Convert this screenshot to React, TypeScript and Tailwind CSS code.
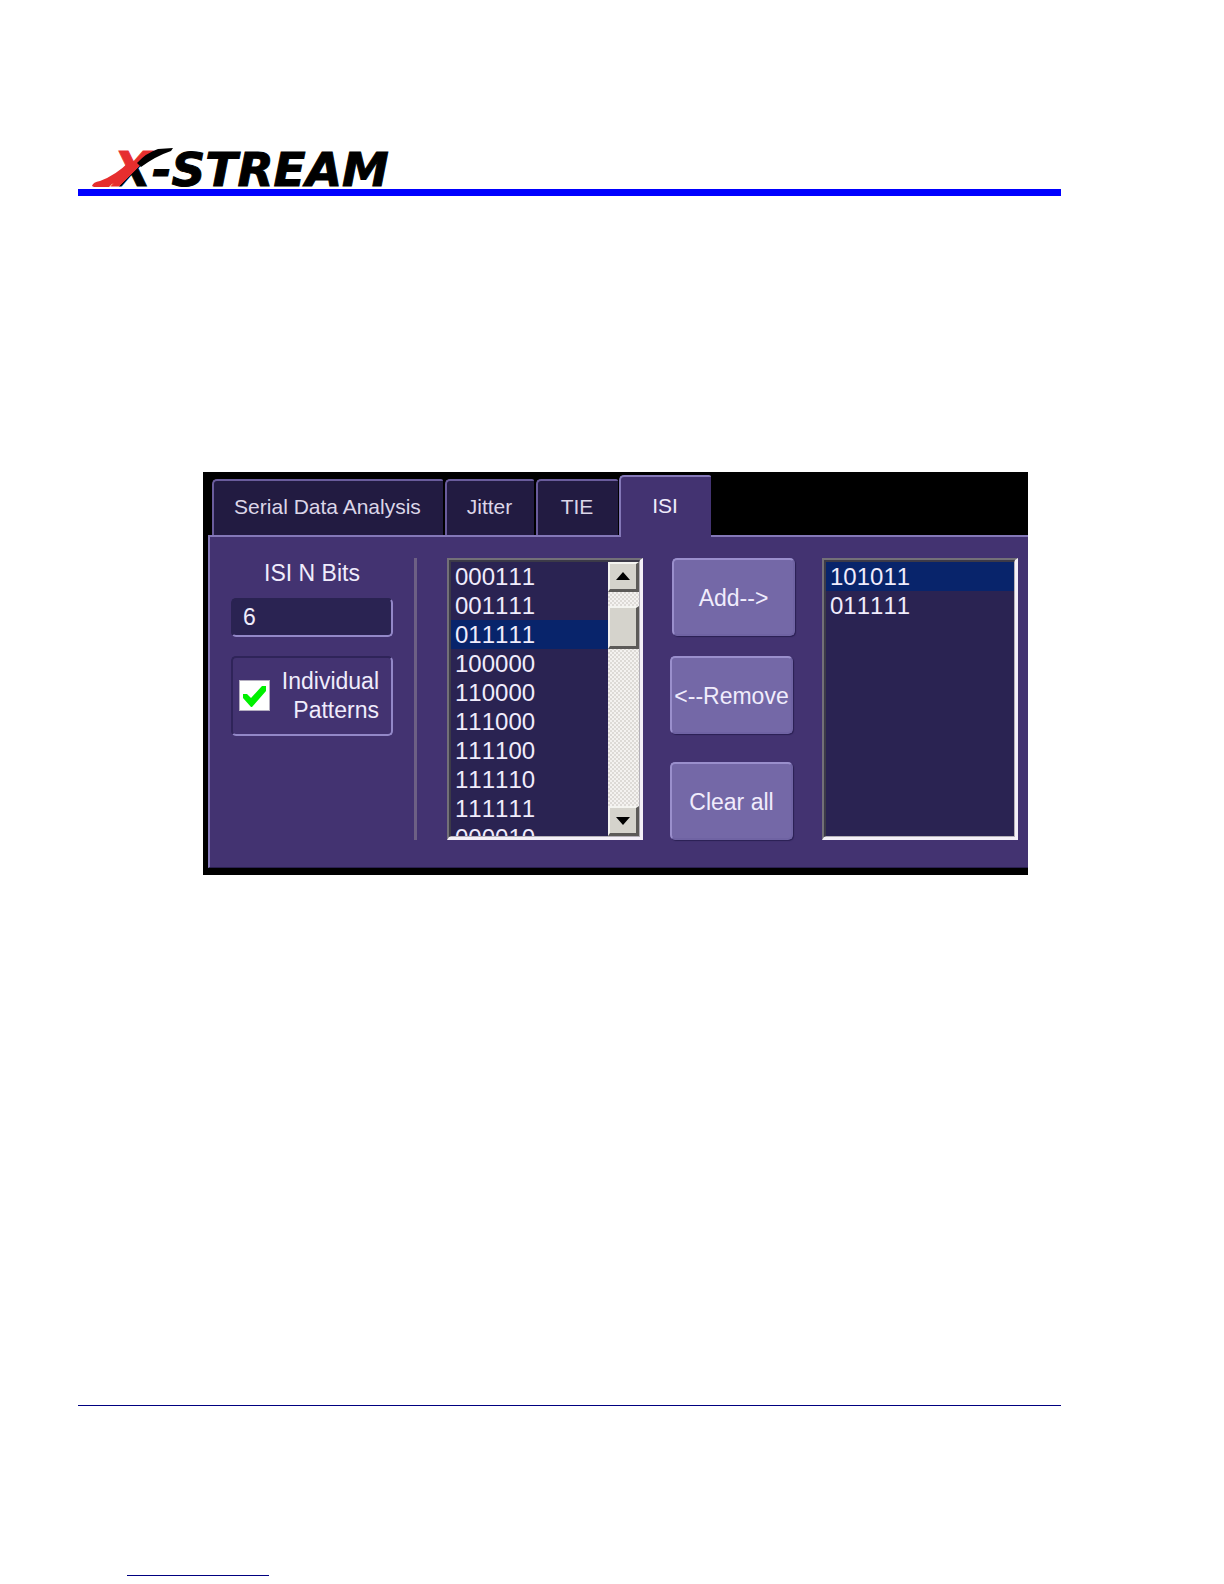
import React, { useRef, useState } from "react";
import clsx from "clsx";

const tabs = [
  { name: "Serial Data Analysis", width: "w-[231px]" },
  { name: "Jitter", width: "w-[89px]" },
  { name: "TIE", width: "w-[82px]" },
  { name: "ISI", width: "w-[92px]" },
];

const patterns = [
  "000111",
  "001111",
  "011111",
  "100000",
  "110000",
  "111000",
  "111100",
  "111110",
  "111111",
  "000010",
];

export default function App() {
  return (
    <main className="min-h-screen bg-white pt-[148px] pr-[163px] pb-2 pl-[78px] font-['Liberation_Sans',Arial,sans-serif]">
      <header className="border-b-[7px] border-[#0000ff] pb-0.5 pl-3.5">
        <Logo />
      </header>
      <IsiDialog />
      <footer className="mt-[530px] border-t border-[#000080] pt-[169px]">
        <div className="ml-[49px] h-px w-[142px] bg-[#000080]" />
      </footer>
    </main>
  );
}

function Logo() {
  return (
    <svg
      width="310"
      height="39"
      viewBox="0 0 310 39"
      className="block overflow-visible font-['DejaVu_Sans',sans-serif] font-bold italic [font-kerning:none]"
      role="img"
      aria-label="X-STREAM"
    >
      <defs>
        <linearGradient id="split" gradientUnits="userSpaceOnUse" x1="0" y1="0" x2="66" y2="66">
          <stop offset="0.5" stopColor="#e62e2e" />
          <stop offset="0.5" stopColor="#000" />
        </linearGradient>
      </defs>
      <text x="22" y="38" fontSize="48" fill="url(#split)" stroke="url(#split)">
        X
      </text>
      <text x="60" y="38" fontSize="47" stroke="#000">
        -STREAM
      </text>
      {/* swooshes that carry on the strokes of the X */}
      <path d="M0 38 Q1 34 8 33 Q24 27 37 14 L47 18 Q40 27 32 31 Q26 35 20 36 L17 39 L2 39Z" fill="#e62e2e" />
      <path d="M45 15 Q54 5 66 1 L81 0 L79 3 Q64 8 49 19Z" fill="#000" />
    </svg>
  );
}

function IsiDialog() {
  const [activeTab, setActiveTab] = useState("ISI");
  const [bits, setBits] = useState("6");
  const [individual, setIndividual] = useState(true);
  const [pattern, setPattern] = useState("011111");
  const [chosen, setChosen] = useState(["101011", "011111"]);
  const [current, setCurrent] = useState("101011");

  const add = () => {
    if (!chosen.includes(pattern)) setChosen([...chosen, pattern]);
  };
  const remove = () => setChosen(chosen.filter((p) => p !== current));

  return (
    <section className="mt-[276px] mr-[33px] ml-[125px] bg-black pt-[3px] pb-[7px] text-[#f0ecfc]">
      <div role="tablist" className="flex h-[60px] items-end gap-0.5 pl-[9px]">
        {tabs.map(({ name, width }) => (
          <button
            key={name}
            role="tab"
            aria-selected={name === activeTab}
            onClick={() => setActiveTab(name)}
            className={clsx(
              "shrink-0 rounded-tl-[5px] rounded-tr-[2px] border-t-2 border-l-2 pr-0.5 pb-0.5 text-[21px] leading-6 whitespace-nowrap",
              width,
              name === activeTab
                ? "z-10 -mb-0.5 -ml-px h-[62px] border-[#8478b8] bg-[#433371]"
                : "h-14 border-[#6a5c9c] bg-[#221b41] text-[#dcd6e8]"
            )}
          >
            {name}
          </button>
        ))}
      </div>

      <div className="ml-[5px] flex border-t-2 border-b border-l-2 border-t-[#8478b8] border-b-[#2a2050] border-l-[#8478b8] bg-[#433371] pt-[21px] pr-2.5 pb-[27px] pl-[21px]">
        <div className="flex w-[162px] shrink-0 flex-col">
          <label htmlFor="bits" className="text-center text-[23px] leading-[30px]">
            ISI N Bits
          </label>
          <input
            id="bits"
            value={bits}
            onChange={(e) => setBits(e.target.value)}
            className="mt-2.5 h-[39px] w-full rounded-[5px] border-2 border-t-[#2a2352] border-r-[#9388c8] border-b-[#9388c8] border-l-[#2a2352] bg-[#2a2352] px-2.5 text-[23px] leading-7 outline-none"
          />
          <label className="mt-[19px] flex h-20 items-center justify-between rounded-[5px] border-2 border-t-[#2f2459] border-r-[#9388c8] border-b-[#9388c8] border-l-[#2f2459] pr-3 pl-1.5 text-right text-[23px] leading-[29px]">
            <span className="relative mb-0.5 block size-[31px] shrink-0">
              <input
                type="checkbox"
                checked={individual}
                onChange={(e) => setIndividual(e.target.checked)}
                className="block size-[31px] appearance-none border border-[#b4aec0] bg-white"
              />
              {individual && (
                <svg viewBox="0 0 31 31" className="pointer-events-none absolute inset-0">
                  <path d="M4 14 L8 14 L12 18 L23 6 L27 6 L27 11 L13 27 L12 27 L4 18Z" fill="#00f000" />
                </svg>
              )}
            </span>
            <span>
              Individual
              <br />
              Patterns
            </span>
          </label>
        </div>

        <div className="mr-[30px] ml-[21px] w-[3px] shrink-0 bg-[#6d6084]" />

        <PatternList
          label="Available patterns"
          items={patterns}
          selected={pattern}
          onSelect={setPattern}
          scrollable
        />

        <div className="mx-[27px] flex w-[125px] shrink-0 flex-col justify-between">
          <PanelButton className="self-end" onClick={add}>
            Add--&gt;
          </PanelButton>
          <PanelButton className="mb-2" onClick={remove}>
            &lt;--Remove
          </PanelButton>
          <PanelButton onClick={() => setChosen([])}>Clear all</PanelButton>
        </div>

        <PatternList
          label="Selected patterns"
          items={chosen}
          selected={current}
          onSelect={setCurrent}
        />
      </div>
    </section>
  );
}

function PanelButton({
  className,
  children,
  onClick,
}: {
  className?: string;
  children: React.ReactNode;
  onClick: () => void;
}) {
  return (
    <button
      onClick={onClick}
      className={clsx(
        "h-[78px] w-[123px] rounded-[5px] border-2 border-t-[#9a8fcc] border-r-[#6f63a3] border-b-[#6f63a3] border-l-[#9a8fcc] bg-[#7468a7] pt-0.5 text-[23px] leading-7 whitespace-nowrap shadow-[1px_1px_1px_#2b2054]",
        className
      )}
    >
      {children}
    </button>
  );
}

function PatternList({
  label,
  items,
  selected,
  onSelect,
  scrollable = false,
}: {
  label: string;
  items: string[];
  selected: string;
  onSelect: (item: string) => void;
  scrollable?: boolean;
}) {
  const listRef = useRef<HTMLUListElement>(null);
  const scroll = (rows: number) => listRef.current?.scrollBy(0, rows * 29);

  return (
    <div className="h-[282px] min-w-0 flex-1 border-t-2 border-r-[3px] border-b-[3px] border-l-2 border-t-[#737078] border-r-[#f4f0f8] border-b-[#f4f0f8] border-l-[#737078]">
      <div className="flex h-full border-t-2 border-r border-b border-l-2 border-t-[#3c3a48] border-r-[#b4b0b8] border-b-[#b4b0b8] border-l-[#3c3a48] bg-[#2a2352]">
        <ul
          ref={listRef}
          role="listbox"
          aria-label={label}
          className="h-full flex-1 overflow-hidden text-[24px] leading-[29px] [font-kerning:none]"
        >
          {items.map((item) => (
            <li
              key={item}
              role="option"
              aria-selected={item === selected}
              onClick={() => onSelect(item)}
              className={clsx("h-[29px] pl-1", item === selected && "bg-[#08246b]")}
            >
              {item}
            </li>
          ))}
        </ul>
        {scrollable && (
          <div className="flex w-[31px] shrink-0 flex-col bg-[#e9e7e4] bg-[repeating-conic-gradient(#dddad6_0_25%,#f4f2f0_0_50%)] bg-size-[4px_4px]">
            <ScrollButton label="Scroll up" points="15,10 22,18 8,18" onClick={() => scroll(-1)} />
            <div className="mt-3.5 h-[43px] border-t-2 border-r-[3px] border-b-[3px] border-l-2 border-t-[#f4f4f0] border-r-[#5c5a58] border-b-[#5c5a58] border-l-[#f4f4f0] bg-[#d5d3cc]" />
            <div className="flex-1" />
            <ScrollButton label="Scroll down" points="8,11 22,11 15,19" onClick={() => scroll(1)} />
          </div>
        )}
      </div>
    </div>
  );
}

function ScrollButton({
  label,
  points,
  onClick,
}: {
  label: string;
  points: string;
  onClick: () => void;
}) {
  return (
    <button
      aria-label={label}
      onClick={onClick}
      className="h-[30px] shrink-0 border-t-2 border-r-[3px] border-b-[3px] border-l-2 border-t-[#f4f4f0] border-r-[#5c5a58] border-b-[#5c5a58] border-l-[#f4f4f0] bg-[#d5d3cc]"
    >
      <svg viewBox="2 2 26 25" className="block h-[25px] w-[26px]">
        <polygon points={points} fill="#000" />
      </svg>
    </button>
  );
}
